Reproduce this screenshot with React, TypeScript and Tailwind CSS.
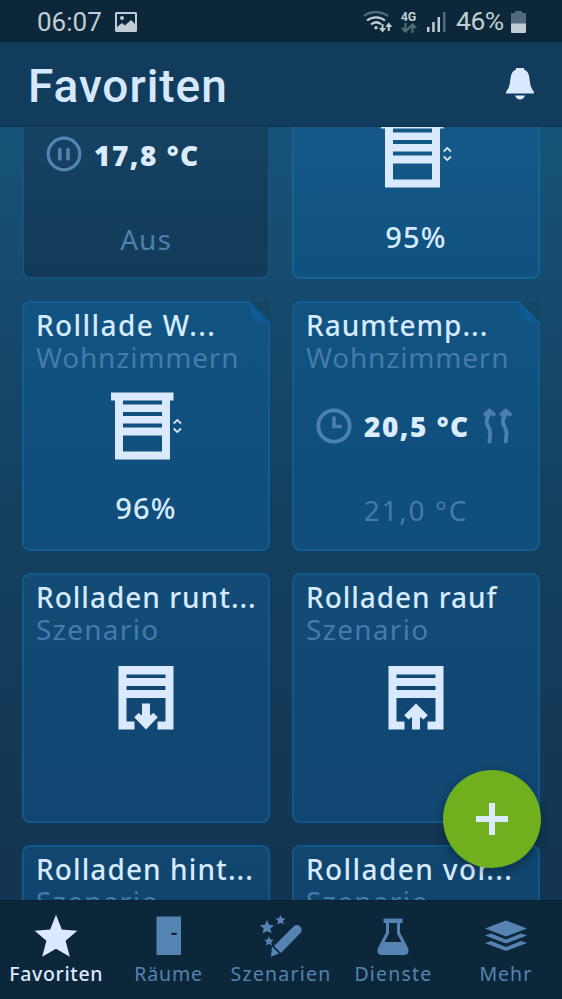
import type { ReactNode } from "react";

const SANS = "font-['Noto_Sans',sans-serif]";

function Shutter() {
  return (
    <svg width="74" height="68" viewBox="0 0 74 68" className="block">
      <path
        fill="#dbe9ff"
        fillRule="evenodd"
        d="M0 .5h62.500v8H59v59H4v-59H0zM12 8.500v4h39v-4zM12 20v4h39v-4zM12 31.500v4h39v-4zM12 43.500v16h39v-16z"
      />
      <path d="m62.700 31.500 3.600-3.600 3.600 3.600M62.700 36.500l3.600 3.600 3.600-3.600" fill="none" stroke="#dbe9ff" strokeWidth="1.800" />
    </svg>
  );
}

function ShutterScene({ up }: { up?: boolean }) {
  return (
    <svg width="56" height="64" viewBox="0 0 56 64" className="block">
      <path
        fill="#dbe9ff"
        fillRule="evenodd"
        d="M.5 0h55v63.500h-16v-8h8V32h-39v23.500h8v8H.5zM8.500 8.500v3.500h39V8.500zM8.500 20v4h39v-4z"
      />
      {up ? (
        <path fill="#dbe9ff" d="m28 37.500 11.800 11.800-4.300 4.300-3.500-2.600v12.500h-8V51l-3.500 2.600-4.300-4.300z" />
      ) : (
        <path fill="#dbe9ff" d="M28 63.500 16.200 51.200l4.300-4.300L24 49.500v-12h8v12l3.500-2.600 4.300 4.300z" />
      )}
    </svg>
  );
}

function Pause() {
  return (
    <svg width="36" height="36" viewBox="0 0 36 36" fill="none" stroke="#5584b2" className="block shrink-0">
      <circle cx="18" cy="18" r="15.800" strokeWidth="3.200" />
      <path d="M13.800 13.500v9.500M22 13.500v9.500" strokeWidth="3.600" strokeLinecap="round" />
    </svg>
  );
}

function Clock() {
  return (
    <svg width="36" height="36" viewBox="0 0 36 36" fill="none" stroke="#4c80b1" className="block shrink-0">
      <circle cx="18" cy="18" r="15.700" strokeWidth="3.800" />
      <path d="M18 8.500v10h7.800" strokeWidth="3.600" />
    </svg>
  );
}

function Heat() {
  const wave = "M6.500 4c0 4-3 5.500-3 9.500s3.700 6.500 3.700 11c0 4-.7 5.500-.7 9";
  const head = "M6.500.500 12.800 6l-2 2.400-4.300-2.600-4.300 2.600L.2 6z";
  return (
    <svg width="30" height="36" viewBox="0 0 30 36" fill="none" stroke="#4c80b1" strokeWidth="3.800" strokeLinecap="round" className="block shrink-0">
      <path d={wave} />
      <path d={wave} transform="translate(16.300 0)" />
      <path d={head} fill="#4c80b1" strokeWidth="0.600" />
      <path d={head} fill="#4c80b1" strokeWidth="0.600" transform="translate(16.300 0)" />
    </svg>
  );
}

type CardProps = {
  title?: string;
  titleClass?: string;
  subtitle?: string;
  subtitleClass?: string;
  fold?: boolean;
  cut?: boolean;
  tone: string;
  children?: ReactNode;
};

function Card({ title, titleClass, subtitle, subtitleClass, fold, cut, tone, children }: CardProps) {
  return (
    <div
      className={`relative flex flex-col border-2 rounded-[8px] h-[250px] bg-linear-to-b ${tone} ${
        cut ? "rounded-t-none border-t-0" : ""
      }`}
    >
      {fold && (
        <svg width="22" height="22" viewBox="0 0 22 22" className="absolute -right-[2px] -top-[2px]">
          <path d="M1 0h21v21z" fill="#154665" />
          <path d="M1 1c.5 14 3 20 12 20h8.500z" fill="#0d5a94" />
          <path d="m1 1 20 20" stroke="#135d90" fill="none" />
        </svg>
      )}
      {title && <div className={`ml-[12px] mt-[6px] h-8 whitespace-nowrap leading-8 text-[28px] font-medium text-[#d6eaff] ${titleClass}`}>{title}</div>}
      {subtitle && <div className={`ml-[12px] h-8 whitespace-nowrap leading-8 text-[28px] text-[#457aab] ${subtitleClass}`}>{subtitle}</div>}
      {children}
    </div>
  );
}

function StatusBar() {
  return (
    <div className="flex h-[42px] shrink-0 items-center bg-[#0b2739] pl-[37px] pr-[36px] pt-[1px] font-[Roboto,sans-serif] text-[#c0cdd2]">
      <span className="w-[66px] whitespace-nowrap text-[26px] leading-none">06:07</span>
      <svg width="22" height="20" viewBox="0 0 22 20" className="ml-3 block">
        <path fill="#c0cdd2" fillRule="evenodd" d="M1.500 0h19Q22 0 22 1.500v17q0 1.500-1.500 1.500h-19Q0 20 0 18.500v-17Q0 0 1.500 0zM2 2v13l5-4 3 2.500L16 8l4 4V2zM7 4a2 2 0 1 1 0 4 2 2 0 0 1 0-4z" />
      </svg>
      <svg width="29" height="22" viewBox="0 0 29 22" fill="none" strokeWidth="2.300" className="ml-auto block">
        <path d="M1 5C7-.2 18-.2 25 5" stroke="#506b79" />
        <path d="M4 9.500c5-4.300 13-4.300 18 0M8 13.500c3-2.700 7-2.700 10-.4" stroke="#c0cdd2" />
        <circle cx="13" cy="16.800" r="1.700" fill="#c0cdd2" />
        <path d="M19.500 13v6M25.800 20v-6" stroke="#c0cdd2" strokeWidth="2" />
        <path d="M16 17h7l-3.500 4.500zM22.300 16h7l-3.500-4.500z" fill="#c0cdd2" />
      </svg>
      <div className="ml-[8px] mr-[2px] flex w-[17px] flex-col items-center">
        <span className="text-[12.500px] font-bold leading-[11px]">4G</span>
        <svg width="16" height="10" viewBox="0 0 16 10" fill="none" stroke="#506b79" strokeWidth="2.200" className="mt-[1px] block">
          <path d="M4.500 0v8M1 5l3.500 3.500L8 5M11.500 10V2M8 5l3.500-3.500L15 5" />
        </svg>
      </div>
      <svg width="19" height="20" viewBox="0 0 19 20" className="ml-[8px] block">
        <path fill="#c0cdd2" d="M0 15h2.500v5H0zM5.200 10h2.500v10H5.200zM10.500 5H13v15h-2.500z" />
        <path fill="#506b79" d="M16 0h2.500v20H16z" />
      </svg>
      <span className="ml-[10px] w-[51px] whitespace-nowrap text-[26.500px] leading-none tracking-[-0.500px]">46%</span>
      <svg width="15" height="22" viewBox="0 0 15 22" className="ml-[4px] block">
        <path fill="#506b79" d="M4 0h7v2h4v11H0V2h4z" />
        <path fill="#c0cdd2" d="M0 12.500h15V21q0 1-1 1H1q-1 0-1-1z" />
      </svg>
    </div>
  );
}

function StarIcon() {
  return (
    <svg width="44" height="44" viewBox="0 0 44 44" fill="#dbe9ff">
      <path d="m22 .800 5.800 14.700 15.500 1.300-11.700 10 4.200 16L22 34.800 8.200 42.800l4.200-16L.700 16.800l15.500-1.300z" />
    </svg>
  );
}

function DoorIcon() {
  return (
    <svg width="44" height="44" viewBox="0 0 44 44">
      <path fill="#5584b2" d="M9.500 2.500H34v38.500H9.500z" />
      <rect x="24" y="18.700" width="6" height="2.300" rx="1" fill="#0b2739" />
    </svg>
  );
}

function WandIcon() {
  const star = "m0-7 2.100 4.700 5 .500-3.800 3.300L4.500 6.500 0 4l-4.500 2.500 1.200-5L-7.100-1.800l5-.5z";
  return (
    <svg width="44" height="44" viewBox="0 0 44 44" fill="#5584b2">
      <path d={star} transform="translate(8 13)" />
      <path d={star} transform="translate(21.500 5.800) scale(.72)" />
      <path d={star} transform="translate(10 27) scale(.68)" />
      <path d="M34.500 12.500q4-3 7 .3 2.600 3.400-.5 6.700L22 39l-7-7zM13 32.500l7 7-8 3.300z" />
    </svg>
  );
}

function FlaskIcon() {
  return (
    <svg width="44" height="44" viewBox="0 0 44 44">
      <path fill="#5584b2" fillRule="evenodd" d="M12.500 4.500h19V9H29v9.500l8.300 16q1.500 6-4 6.500H10.700q-5.500-.5-4-6.500L15 18.500V9h-2.500zM18 9v10.500L13.500 28h17L26 19.500V9z" />
    </svg>
  );
}

function LayersIcon() {
  return (
    <svg width="44" height="44" viewBox="0 0 44 44" fill="#5584b2">
      <path d="m22 6.500 21 8-21 8-21-8zM1 21.500l6-2 15 6 15-6 6 2-21 8zM1 29l6-2 15 6 15-6 6 2-21 8z" />
    </svg>
  );
}

function NavItem({ icon, label, labelClass }: { icon: ReactNode; label: string; labelClass: string }) {
  return (
    <div className="flex flex-1 flex-col items-center pt-[13px]">
      {icon}
      <span className={`mt-[2px] whitespace-nowrap text-[19.500px] leading-7 ${labelClass}`}>{label}</span>
    </div>
  );
}

const ROW2 = "border-[#125c8f] from-[#115381] to-[#104d7a]";
const ROW3 = "border-[#12598a] from-[#114b76] to-[#104671]";
const ROW4 = "border-[#125787] from-[#10466f] to-[#0f4169]";

export default function App() {
  return (
    <div className={`relative flex h-[999px] w-[562px] flex-col overflow-hidden bg-[#143a5a] ${SANS}`}>
      <StatusBar />
      <header className="flex h-[85px] shrink-0 items-center justify-between border-b-2 border-[#123653] bg-[#123c5b] pl-[28px] pr-[28px]">
        <h1 className="pt-[4px] font-[Roboto,sans-serif] text-[46px] font-medium leading-none tracking-[0.950px] text-[#d6e8ff]">Favoriten</h1>
        <svg width="28" height="32" viewBox="0 0 28 32" fill="#dbe9ff">
          <path d="M10 0h8v1.500q5 2 5.500 9 .5 9 4.500 13.500v1.500H0V24q4-4.500 4.500-13.500Q5 3.500 10 1.500zM9 27.500h10q-1.500 4-5 4t-5-4z" />
        </svg>
      </header>
      <main className="min-h-0 flex-1 overflow-hidden bg-linear-to-b from-[#175379] via-[#14405f] to-[#133452]">
        <div className="grid grid-cols-2 gap-x-[22px] gap-y-[22px] px-[22px]">
          <div className="-mt-[98px]">
            <Card cut tone="border-[#15527d] from-[#174666] to-[#133a59]">
              <div className="mt-[107px] flex items-center pl-[22px]">
                <span className="-mt-[3px]"><Pause /></span>
                <span className="ml-[12px] whitespace-nowrap text-[28px] font-black leading-[38px] tracking-[1.500px] text-[#dcecff]">17,8 °C</span>
              </div>
              <div className="mt-[49px] text-center text-[28px] leading-8 tracking-[1px] text-[#4c7fac]">Aus</div>
            </Card>
          </div>
          <div className="-mt-[98px]">
            <Card cut tone="border-[#166396] from-[#165e8f] to-[#10517e]">
              <div className="ml-[87px] mt-[91px]"><Shutter /></div>
              <div className="mt-[33px] text-center text-[29px] font-medium leading-8 tracking-[1.200px] text-[#d6eaff]">95%</div>
            </Card>
          </div>
          <Card fold tone={ROW2} title="Rolllade W..." subtitle="Wohnzimmern" titleClass="tracking-[1.400px]" subtitleClass="tracking-[0.800px]">
            <div className="ml-[87px] mt-[19px]"><Shutter /></div>
            <div className="mt-[32px] text-center text-[29px] font-medium leading-8 tracking-[1.200px] text-[#d6eaff]">96%</div>
          </Card>
          <Card fold tone={ROW2} title="Raumtemp..." subtitle="Wohnzimmern" titleClass="tracking-[1px]" subtitleClass="tracking-[0.800px]">
            <div className="mt-[34px] flex items-center pl-[22px]">
              <Clock />
              <span className="ml-[12px] w-[108px] whitespace-nowrap text-[28px] font-black leading-[38px] tracking-[1.500px] text-[#dcecff]">20,5 °C</span>
              <span className="ml-[11px]"><Heat /></span>
            </div>
            <div className="mt-[49px] text-center text-[28px] leading-8 tracking-[1.700px] text-[#457aab]">21,0 °C</div>
          </Card>
          <Card tone={ROW3} title="Rolladen runt..." subtitle="Szenario" titleClass="tracking-[1px]" subtitleClass="tracking-[1.300px]">
            <div className="ml-[94px] mt-[21px]"><ShutterScene /></div>
          </Card>
          <Card tone={ROW3} title="Rolladen rauf" subtitle="Szenario" titleClass="tracking-[0.950px]" subtitleClass="tracking-[1.300px]">
            <div className="ml-[94px] mt-[21px]"><ShutterScene up /></div>
          </Card>
          <Card tone={ROW4} title="Rolladen hint..." subtitle="Szenario" titleClass="tracking-[1.100px]" subtitleClass="tracking-[1.300px]" />
          <Card tone={ROW4} title="Rolladen vor..." subtitle="Szenario" titleClass="tracking-[1.400px]" subtitleClass="tracking-[1.300px]" />
        </div>
      </main>
      <nav className="flex h-[99px] shrink-0 border-t border-[#081f2f] bg-[#0b2739]">
        <NavItem icon={<StarIcon />} label="Favoriten" labelClass="text-[#dbe9ff] font-medium tracking-[0.650px]" />
        <NavItem icon={<DoorIcon />} label="Räume" labelClass="text-[#5584b2] tracking-[0.900px]" />
        <NavItem icon={<WandIcon />} label="Szenarien" labelClass="text-[#5584b2] tracking-[1.200px]" />
        <NavItem icon={<FlaskIcon />} label="Dienste" labelClass="text-[#5584b2] tracking-[1.200px]" />
        <NavItem icon={<LayersIcon />} label="Mehr" labelClass="text-[#5584b2] tracking-[1px]" />
      </nav>
      <button className="absolute left-[443px] top-[770px] flex h-[98px] w-[98px] items-center justify-center rounded-full bg-[#70b01e] shadow-[0_4px_10px_rgba(0,0,0,0.3)]">
        <svg width="32" height="32" viewBox="0 0 32 32" fill="#dbeaff">
          <path d="M13 0h6v13h13v6H19v13h-6V19H0v-6h13z" />
        </svg>
      </button>
    </div>
  );
}
